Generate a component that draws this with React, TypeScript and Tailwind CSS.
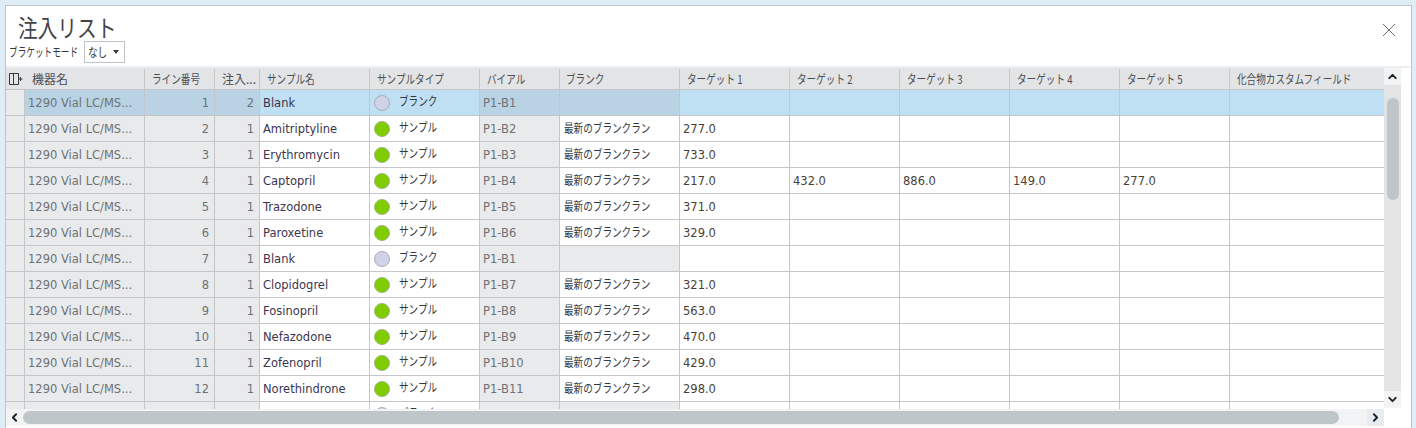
import React from 'react';
import { ChevronUp, ChevronDown, ChevronLeft, ChevronRight } from 'lucide-react';

const font = "font-['DejaVu_Sans','Noto_Sans_CJK_JP',sans-serif]";
const jp = "font-['Noto_Sans_CJK_JP',sans-serif]";

type Row = { line: number; inj: number; name: string; blank: boolean; vial: string; targets: string[] };

const rows: Row[] = [
  { line: 1, inj: 2, name: 'Blank', blank: true, vial: 'P1-B1', targets: [] },
  { line: 2, inj: 1, name: 'Amitriptyline', blank: false, vial: 'P1-B2', targets: ['277.0'] },
  { line: 3, inj: 1, name: 'Erythromycin', blank: false, vial: 'P1-B3', targets: ['733.0'] },
  { line: 4, inj: 1, name: 'Captopril', blank: false, vial: 'P1-B4', targets: ['217.0', '432.0', '886.0', '149.0', '277.0'] },
  { line: 5, inj: 1, name: 'Trazodone', blank: false, vial: 'P1-B5', targets: ['371.0'] },
  { line: 6, inj: 1, name: 'Paroxetine', blank: false, vial: 'P1-B6', targets: ['329.0'] },
  { line: 7, inj: 1, name: 'Blank', blank: true, vial: 'P1-B1', targets: [] },
  { line: 8, inj: 1, name: 'Clopidogrel', blank: false, vial: 'P1-B7', targets: ['321.0'] },
  { line: 9, inj: 1, name: 'Fosinopril', blank: false, vial: 'P1-B8', targets: ['563.0'] },
  { line: 10, inj: 1, name: 'Nefazodone', blank: false, vial: 'P1-B9', targets: ['470.0'] },
  { line: 11, inj: 1, name: 'Zofenopril', blank: false, vial: 'P1-B10', targets: ['429.0'] },
  { line: 12, inj: 1, name: 'Norethindrone', blank: false, vial: 'P1-B11', targets: ['298.0'] },
  { line: 13, inj: 1, name: 'Blank', blank: true, vial: 'P1-B1', targets: [] },
];

const headCell = 'h-full shrink-0 border-r border-[#c4c6c8] flex items-center whitespace-nowrap overflow-hidden text-[12px] text-[#4a4f55]';
const bodyCell = 'h-full shrink-0 border-r border-[#c4c6c8] flex items-center whitespace-nowrap overflow-hidden text-[11.5px] pt-[2px]';

// kana in the reference is a narrow UI face, so squeeze it horizontally
function Narrow({ children }: { children: React.ReactNode }) {
  return <span className={`inline-block whitespace-nowrap origin-left scale-x-[0.8] ${jp}`}>{children}</span>;
}

function GridHeader() {
  return (
    <div className="h-[22px] shrink-0 flex bg-[#e3e4e6] border-b border-[#c4c6c8] w-[1378px] pt-[1px]">
      <div className="w-[19px] shrink-0 h-full flex items-center justify-center">
        <svg width="15" height="14" viewBox="0 0 15 14" fill="none" stroke="#33383d" strokeWidth="1">
          <path d="M1.5 1.5h9v11h-9z M5.5 1.5v11 M10.5 7h4 M12.5 5v4" />
        </svg>
      </div>
      <div className={`${headCell} w-[120px] pl-[7px] ${jp}`}>機器名</div>
      <div className={`${headCell} w-[70px] pl-[7px]`}><Narrow>ライン番号</Narrow></div>
      <div className={`${headCell} w-[45px] pl-[7px] ${jp}`}>注入...</div>
      <div className={`${headCell} w-[110px] pl-[7px]`}><Narrow>サンプル名</Narrow></div>
      <div className={`${headCell} w-[110px] pl-[7px]`}><Narrow>サンプルタイプ</Narrow></div>
      <div className={`${headCell} w-[80px] pl-[7px]`}><Narrow>バイアル</Narrow></div>
      <div className={`${headCell} w-[120px] pl-[6px]`}><Narrow>ブランク</Narrow></div>
      <div className={`${headCell} w-[110px] pl-[7px]`}><Narrow>ターゲット 1</Narrow></div>
      <div className={`${headCell} w-[110px] pl-[7px]`}><Narrow>ターゲット 2</Narrow></div>
      <div className={`${headCell} w-[110px] pl-[7px]`}><Narrow>ターゲット 3</Narrow></div>
      <div className={`${headCell} w-[110px] pl-[7px]`}><Narrow>ターゲット 4</Narrow></div>
      <div className={`${headCell} w-[110px] pl-[7px]`}><Narrow>ターゲット 5</Narrow></div>
      <div className={`${headCell} w-[154px] pl-[7px] border-r-0`}><Narrow>化合物カスタムフィールド</Narrow></div>
    </div>
  );
}

function GridRow({ row, selected }: { row: Row; selected: boolean }) {
  const ro = selected ? 'bg-[#b9d3e4]' : 'bg-[#e9eaec]';
  const rw = selected ? 'bg-[#bfdff3]' : 'bg-white';
  return (
    <div className="h-[26px] shrink-0 flex border-b border-[#c4c6c8] w-[1378px]">
      <div className="w-[19px] shrink-0 h-full bg-[#e9eaec] border-r border-[#c4c6c8]" />
      <div className={`${bodyCell} ${ro} w-[120px] pl-[3px] text-[#6d7277]`}>1290 Vial LC/MS...</div>
      <div className={`${bodyCell} ${ro} w-[70px] justify-end pr-[5px] text-[#6d7277]`}>{row.line}</div>
      <div className={`${bodyCell} ${ro} w-[45px] justify-end pr-[5px] text-[#6d7277]`}>{row.inj}</div>
      <div className={`${bodyCell} ${rw} w-[110px] pl-[3px] text-[#3c3550]`}>{row.name}</div>
      <div className={`h-full shrink-0 border-r border-[#c4c6c8] flex items-center whitespace-nowrap overflow-hidden w-[110px] pl-[4px] text-[#33383d] text-[12px] ${rw}`}>
        {row.blank ? (
          <span className="w-[16px] h-[16px] rounded-full bg-[#d0d3e8] border border-[#a9adb5] shrink-0" />
        ) : (
          <span className="w-[16px] h-[16px] rounded-full bg-[#80cc00] border border-[#9bb47c] shrink-0" />
        )}
        <span className="ml-[9px] mb-[2px]"><Narrow>{row.blank ? 'ブランク' : 'サンプル'}</Narrow></span>
      </div>
      <div className={`${bodyCell} ${ro} w-[80px] pl-[3px] text-[#6d7277]`}>{row.vial}</div>
      <div className={`${bodyCell} ${row.blank ? ro : rw} w-[120px] pl-[4px] text-[#33383d]`}>
        {row.blank ? '' : <span className="text-[12px] mb-[3px]"><Narrow>最新のブランクラン</Narrow></span>}
      </div>
      {[0, 1, 2, 3, 4].map((i) => (
        <div key={i} className={`${bodyCell} ${rw} w-[110px] pl-[3px] text-[#4a3f38]`}>
          {row.targets[i] ?? ''}
        </div>
      ))}
      <div className={`${bodyCell} ${rw} w-[154px] border-r-0`} />
    </div>
  );
}

export default function App() {
  return (
    <div className={`h-[428px] w-[1416px] overflow-hidden bg-[#dfedf6] pt-[5px] pl-[5px] pr-[4px] ${font}`}>
      <div className="h-[423px] bg-white border-t border-x border-[#bfc4c8] flex flex-col">
        <div className="h-[62px] shrink-0 flex justify-between border-b-2 border-[#eceeef]">
          <div className="pl-[3px]">
            <div className="pl-[9px] pt-[6px] h-[35px] text-[24px] leading-[30px] text-[#3f4448]">
              <span className={`inline-block whitespace-nowrap origin-left scale-x-[0.82] ${jp}`}>注入リスト</span>
            </div>
            <div className="flex items-center">
              <span className="w-[75px] text-[12px] text-[#33383d]">
                <span className={`inline-block whitespace-nowrap origin-left scale-x-[0.72] ${jp}`}>ブラケットモード</span>
              </span>
              <div className="h-[22px] w-[41px] border border-[#bfc4c8] flex items-center justify-between pl-[3px] pr-[5px] text-[12px] text-[#33383d]">
                <Narrow>なし</Narrow>
                <span className="w-0 h-0 border-x-[3px] border-x-transparent border-t-[4px] border-t-[#33383d]" />
              </div>
            </div>
          </div>
          <svg width="14" height="14" viewBox="0 0 14 14" stroke="#6d7277" strokeWidth="1" fill="none" className="mt-[17px] mr-[15px]">
            <path d="M1 1 13 13 M13 1 1 13" />
          </svg>
        </div>

        <div className="flex-1 min-h-0 flex pr-[10px]">
          <div className="w-[1378px] shrink-0 flex flex-col">
            <GridHeader />
            <div className="h-[319px] overflow-hidden flex flex-col">
              {rows.map((r) => (
                <GridRow key={r.line} row={r} selected={r.line === 1} />
              ))}
            </div>
            <div className="h-[17px] shrink-0 bg-[#f1f3f4] flex items-center">
              <div className="w-[17px] h-full flex items-center justify-center">
                <ChevronLeft size={13} strokeWidth={3.5} className="text-[#1f2326]" />
              </div>
              <div className="w-[1316px] h-[13px] rounded-full bg-[#bfc6c9]" />
              <div className="flex-1" />
              <div className="w-[17px] h-full bg-[#e6ecf1] flex items-center justify-center">
                <ChevronRight size={13} strokeWidth={3.5} className="text-[#1f2326]" />
              </div>
            </div>
          </div>
          <div className="w-[17px] h-[340px] shrink-0 bg-[#e3e4e6] flex flex-col items-center">
            <div className="w-full h-[17px] bg-[#f1f3f4] flex items-center justify-center">
              <ChevronUp size={13} strokeWidth={3.5} className="text-[#1f2326]" />
            </div>
            <div className="w-[12px] h-[102px] mt-[13px] rounded-full bg-[#bfc6c9]" />
            <div className="flex-1" />
            <div className="w-full h-[17px] bg-[#f1f3f4] flex items-center justify-center">
              <ChevronDown size={13} strokeWidth={3.5} className="text-[#1f2326]" />
            </div>
          </div>
        </div>
      </div>
    </div>
  );
}
